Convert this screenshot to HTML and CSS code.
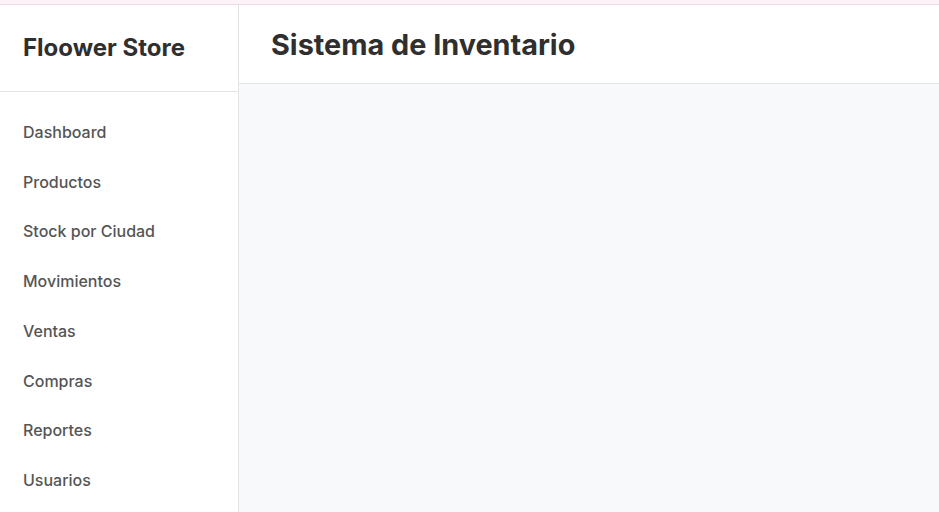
FILE: index.html
```html
<!DOCTYPE html>
<html lang="es">

<head>
    <meta charset="UTF-8">
    <meta name="viewport" content="width=device-width, initial-scale=1.0">
    <title>Floower Store</title>
    <link rel="stylesheet" href="styles.css">
</head>

<body>
    <div class="topbar"></div>
    <div class="layout">
        <aside class="sidebar">
            <div class="brand">Floower Store</div>
            <ul class="menu">
                <li><a href="#">Dashboard</a></li>
                <li><a href="#">Productos</a></li>
                <li><a href="#">Stock por Ciudad</a></li>
                <li><a href="#">Movimientos</a></li>
                <li><a href="#">Ventas</a></li>
                <li><a href="#">Compras</a></li>
                <li><a href="#">Reportes</a></li>
                <li><a href="#">Usuarios</a></li>
            </ul>
        </aside>
        <main class="content">
            <header class="header">
                <h1>Sistema de Inventario</h1>
            </header>
            <div class="panel"></div>
        </main>
    </div>
</body>

</html>
```

FILE: styles.css
```css
* {
    margin: 0px;
    padding: 0px;
    list-style: none;
    box-sizing: border-box;
}

body {
    font-family: Inter, "Noto Sans", sans-serif;
    background-color: #fff;
    color: #333;
    height: 512px;
    overflow: hidden;
}

.topbar {
    height: 5px;
    background-color: #fdf2f7;
    border-bottom: 1px solid #eedde6;
}

.layout {
    display: flex;
    height: 507px;
}

.sidebar {
    width: 239px;
    flex-shrink: 0;
    border-right: 1px solid #e3e3e3;
    background-color: #fff;
}

.sidebar .brand {
    height: 87px;
    display: flex;
    align-items: center;
    padding-left: 23px;
    padding-bottom: 1px;
    font-size: 24px;
    font-weight: 700;
    color: #2f2f2f;
    border-bottom: 1px solid #e3e3e3;
}

.sidebar .menu {
    padding-top: 16px;
}

.sidebar .menu li a {
    display: block;
    padding: 14px 23px;
    font-size: 16px;
    line-height: 21.7px;
    font-weight: 500;
    color: #555;
    text-decoration: none;
}

.content {
    flex: 1;
    display: flex;
    flex-direction: column;
    background-color: #f8f9fb;
}

.header {
    height: 79px;
    display: flex;
    align-items: center;
    padding-left: 32px;
    background-color: #fff;
    border-bottom: 1px solid #e3e3e3;
}

.header h1 {
    font-size: 28.8px;
    font-weight: 700;
    color: #2f2f2f;
}

.panel {
    flex: 1;
}
```
